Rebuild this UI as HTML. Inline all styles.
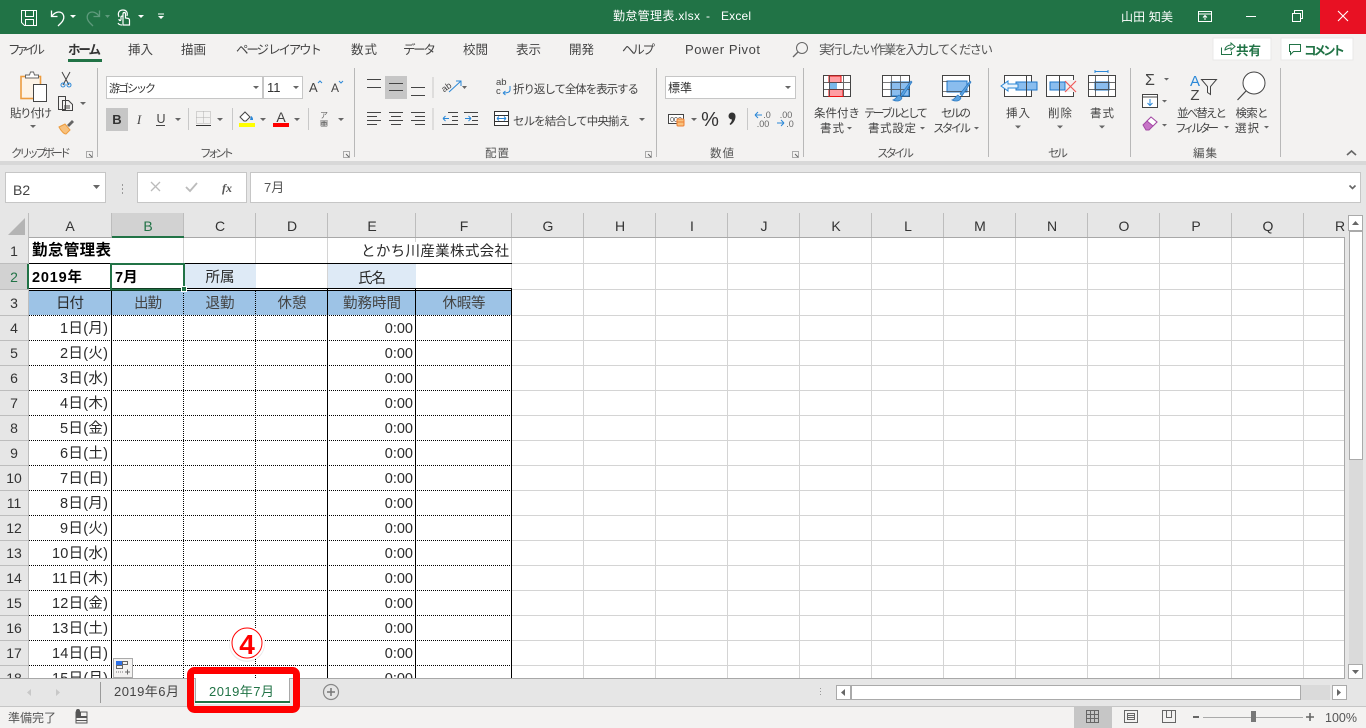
<!DOCTYPE html>
<html lang="ja"><head><meta charset="utf-8"><title>勤怠管理表.xlsx - Excel</title>
<style>
html,body{margin:0;padding:0;background:#e6e6e6;width:1366px;height:728px;overflow:hidden}
svg{display:block}
text{font-family:"Liberation Sans","Noto Sans CJK JP",sans-serif;fill:#444;font-size:12px}
.t{font-size:12.5px;fill:#444}
.g{font-size:11.5px;fill:#555}
.r{font-size:11.5px;fill:#444}
.c{font-size:14.5px;fill:#2a2a2a}
.h{font-size:14px;fill:#333;text-anchor:middle}
.m{text-anchor:middle}
.e{text-anchor:end}
.b{font-weight:bold;fill:#000}
.w{fill:#fff}
.ln{stroke:#444;stroke-width:1;fill:none}
.gr{stroke:#d4d4d4;stroke-width:1;fill:none}
.sep{stroke:#b8b8b8;stroke-width:1}
.dot{stroke:#000;stroke-width:1;stroke-dasharray:1 1;fill:none}
.sol{stroke:#000;stroke-width:1;fill:none}
.tri{fill:#666}
</style></head><body>
<svg width="1366" height="728" viewBox="0 0 1366 728" xmlns="http://www.w3.org/2000/svg">
<rect width="1366" height="728" fill="#e6e6e6"/>
<!-- title bar -->
<rect width="1366" height="34" fill="#217346"/>
<rect x="1320" width="46" height="34" fill="#e81123"/>
<g fill="none" stroke="#fff" stroke-width="1">
<path d="M21.500 10.500h15v15h-12l-3-3z"/><path d="M25.500 10.500v6h8v-6M25.500 25v-5.500h8v5.500"/>
<path d="M51.500 10.500v6h6M52 16c3-4 7-5 10-3 3 3 2 7-1 10l-3 3" stroke-width="1.300"/>
</g>
<path d="M70 15h6l-3 3z" fill="#fff"/>
<g fill="none" stroke="#5e9a7c" stroke-width="1.300"><path d="M99.500 10.500v6h-6M99 16c-3-4-7-5-10-3-3 3-2 7 1 10l3 3"/></g>
<path d="M105 15h5l-2.500 3z" fill="#5e9a7c"/>
<g fill="none" stroke="#fff" stroke-width="1.200"><path d="M119 17c-2-5 1-7 4-7s5 2 4 6M123 25v-11c0-2 2.500-2 2.500 0v4l3 .5c1 .5 1 1 1 2.500v4h-6zM119 19c0 2 2 2 2 0v-2c0-1 1-1 2-1M118 23c1 2 3 2 4 2"/></g>
<path d="M138 15h6l-3 3z" fill="#fff"/>
<path d="M158 13.500h6v1h-6zM158 16h6l-3 3z" fill="#fff"/>
<text x="613" y="20" class="w" textLength="87">勤怠管理表.xlsx</text>
<text x="708" y="20" class="w m">-</text>
<text x="721" y="20" class="w" textLength="30">Excel</text>
<text x="1121" y="21" class="w" textLength="52">山田 知美</text>
<path d="M1198.500 11.500h13v10h-13zM1198.500 14h13M1205 20v-4M1203 17.500l2-2 2 2" fill="none" stroke="#fff"/>
<path d="M1246 16.500h10" stroke="#fff"/>
<path d="M1292.500 13.500h8v8h-8zM1294.500 13v-2.500h8v8H1301" fill="none" stroke="#fff"/>
<path d="M1338 11l10 10M1348 11l-10 10" stroke="#fff" stroke-width="1.100"/>
<!-- ribbon -->
<rect y="34" width="1366" height="127" fill="#f3f2f1"/>
<rect y="161" width="1366" height="4" fill="#d8d8d8"/>
<text x="8" y="54" class="t" textLength="37">ファイル</text>
<text x="68" y="54" class="t" style="font-weight:bold;fill:#333" textLength="33">ホーム</text>
<rect x="68" y="59" width="34" height="3" fill="#217346"/>
<text x="128" y="54" class="t" textLength="25">挿入</text>
<text x="181" y="54" class="t" textLength="25">描画</text>
<text x="236" y="54" class="t" textLength="86">ページ レイアウト</text>
<text x="351" y="54" class="t" textLength="26">数式</text>
<text x="403" y="54" class="t" textLength="33">データ</text>
<text x="463" y="54" class="t" textLength="25">校閲</text>
<text x="516" y="54" class="t" textLength="25">表示</text>
<text x="569" y="54" class="t" textLength="25">開発</text>
<text x="622" y="54" class="t" textLength="33">ヘルプ</text>
<text x="685" y="54" style="font-size:13px;fill:#444" textLength="75">Power Pivot</text>
<circle cx="802" cy="48" r="5.500" fill="none" stroke="#666"/><path d="M798 52l-5 5" stroke="#666" stroke-width="1.300"/>
<text x="819" y="54" class="t" style="fill:#555" textLength="174">実行したい作業を入力してください</text>
<rect x="1213" y="38" width="58" height="22" fill="#fff" stroke="#e8e8e8"/>
<path d="M1221.500 47.500v7h10v-3M1225 50c0-3 3-5 6-5v-2l4 3.500-4 3.500v-2c-2 0-4 1-6 2z" fill="none" stroke="#217346"/>
<text x="1236" y="55" style="font-size:12.500px;font-weight:bold;fill:#217346" textLength="25">共有</text>
<rect x="1281" y="38" width="72" height="22" fill="#fff" stroke="#e8e8e8"/>
<path d="M1289.500 44.500h11v7h-7l-3 3v-3h-1z" fill="none" stroke="#217346"/>
<text x="1304" y="55" style="font-size:12.500px;font-weight:bold;fill:#217346" textLength="41">コメント</text>
<!-- separators -->
<g class="sep"><path d="M97.500 68v89M354.500 68v89M656.500 68v89M803.500 68v89M988.500 68v89M1130.500 68v89M1280.500 68v89"/></g>
<!-- clipboard -->
<rect x="21" y="76.500" width="19.500" height="22" fill="#fdf3e6" stroke="#ed9c3e" stroke-width="1.600"/>
<path d="M25.500 78v-3h4l1-3h3l1 3h4v3z" fill="#fff" stroke="#666"/>
<rect x="33.500" y="84.500" width="13" height="17" fill="#fff" stroke="#444"/>
<text x="31" y="117" class="r m" textLength="42">貼り付け</text>
<path d="M30 125h6l-3 3z" class="tri"/>
<path d="M62 72l7 13M70 72l-7 13" stroke="#444" fill="none"/><circle cx="63" cy="85" r="2" fill="none" stroke="#2b88d8"/><circle cx="69" cy="85" r="2" fill="none" stroke="#2b88d8"/>
<path d="M58.500 96.500h7v13h-7zM62.500 100.500h6l4 4v6h-10z" fill="#f3f2f1" stroke="#444"/>
<path d="M64 106h6M64 108h6" stroke="#444"/>
<path d="M80 102h6l-3 3z" class="tri"/>
<path d="M59 127l6-3 5 6-4 4c-2 0-5-3-7-7z" fill="#f8c17d" stroke="#ed9c3e"/><path d="M67 125l5-5 2 2-5 5z" fill="#666"/>
<text x="11" y="157" class="g" textLength="60">クリップボード</text>
<path d="M86.500 151.500h6v6h-6z" fill="none" stroke="#aaa"/><path d="M89 154l3 3" stroke="#666"/>
<!-- font -->
<rect x="106.500" y="76.500" width="156" height="22" fill="#fff" stroke="#c6c6c6"/>
<rect x="263.500" y="76.500" width="39" height="22" fill="#fff" stroke="#c6c6c6"/>
<text x="109" y="92" style="font-size:11px;fill:#333" textLength="47">游ゴシック</text>
<text x="267" y="92" style="font-size:13px;fill:#333">11</text>
<path d="M253 86h6l-3 3zM293 86h6l-3 3z" class="tri"/>
<text x="309" y="92" style="font-size:13px">A</text><path d="M318 83l2-2 2 2" stroke="#2b88d8" fill="none"/>
<text x="331" y="92" style="font-size:12px">A</text><path d="M339 81l2 2 2-2" stroke="#2b88d8" fill="none"/>
<rect x="106" y="108" width="22" height="23" fill="#c6c6c6"/>
<text x="117" y="124" class="m" style="font-size:13px;font-weight:bold;fill:#333">B</text>
<text x="139" y="124" class="m" style="font-size:13px;font-style:italic;font-family:'Liberation Serif',serif">I</text>
<text x="161" y="123" class="m" style="font-size:12.500px">U</text><path d="M156 125.500h9" stroke="#444"/>
<path d="M175 118h6l-3 3zM217 118h6l-3 3zM260 118h6l-3 3zM294 118h6l-3 3zM338 118h6l-3 3z" class="tri"/>
<path d="M188.500 108v22M232.500 108v22M308.500 108v22M433 77v21M433 108v22" stroke="#c8c8c8"/>
<path d="M196.500 111.500h14v12h-14zM203.500 111.500v12M196.500 117.500h14" fill="none" stroke="#b0b0b0" stroke-dasharray="1 1"/><path d="M196 125.500h15" stroke="#333"/>
<path d="M240 117l5-5 5 5-4 4h-2z" fill="#fff" stroke="#444"/><path d="M251 116c2 1 2 3 2 4h-3z" fill="#2b88d8"/>
<rect x="239" y="123" width="16" height="4" fill="#ff0"/>
<text x="281" y="122" class="m" style="font-size:14px">A</text><rect x="273" y="123" width="16" height="4" fill="#f00"/>
<text x="324" y="118" class="m" style="font-size:8px;fill:#666">ア</text><path d="M320 121h8M320 123h8M320 125h8" stroke="#888"/><text x="324" y="126" class="m" style="font-size:7px;fill:#666">亜</text>
<text x="200" y="157" class="g" textLength="34">フォント</text>
<path d="M343.500 151.500h6v6h-6z" fill="none" stroke="#aaa"/><path d="M346 154l3 3" stroke="#666"/>
<!-- alignment -->
<rect x="385" y="76" width="22" height="23" fill="#c6c6c6"/>
<g class="ln"><path d="M367 79.500h14M367 87.500h14M389 83.500h14M389 90.500h14M411 87.500h14M411 95.500h14"/>
<path d="M367 112.500h14M367 116.500h10M367 120.500h14M367 124.500h10M389 112.500h14M391 116.500h10M389 120.500h14M391 124.500h10M411 112.500h14M415 116.500h10M411 120.500h14M415 124.500h10M448 112.500h10M452 116.500h6M452 120.500h6M442 124.500h16M464 112.500h14M472 116.500h6M472 120.500h6M464 124.500h14"/></g>
<path d="M443 118.500h6M443 118.500l2.500-2.500M443 118.500l2.500 2.500M465 118.500h6M471 118.500l-2.500-2.500M471 118.500l-2.500 2.500" stroke="#2b88d8" fill="none"/>
<text x="441" y="89" style="font-size:9px;fill:#444" transform="rotate(-35 448 86)">ab</text><path d="M449 92l12-11M456 81h5v5" stroke="#2b88d8" fill="none"/>
<path d="M462 86h5l-2.500 3z" class="tri"/>
<text x="496" y="85" style="font-size:9.500px">ab</text><text x="496" y="94" style="font-size:9.500px">c</text><path d="M510 86v4c0 2-2 3-6 3M503 93l2.500-2M503 93l2.500 2" stroke="#2b88d8" fill="none"/>
<text x="513" y="93" class="r" textLength="126">折り返して全体を表示する</text>
<rect x="494.500" y="111.500" width="14" height="14" fill="#fff" stroke="#333"/><path d="M494.500 115.500h14M494.500 121.500h14" stroke="#333"/><rect x="495" y="116" width="13" height="5" fill="#fff"/><path d="M497 118.500h9M497 118.500l2-2M497 118.500l2 2M506 118.500l-2-2M506 118.500l-2 2" stroke="#2b88d8" fill="none"/>
<text x="513" y="125" class="r" textLength="117">セルを結合して中央揃え</text>
<path d="M639 118h6l-3 3z" class="tri"/>
<text x="485" y="157" class="g" textLength="24">配置</text>
<path d="M645.500 151.500h6v6h-6z" fill="none" stroke="#aaa"/><path d="M648 154l3 3" stroke="#666"/>
<!-- number -->
<rect x="665.500" y="76.500" width="130" height="22" fill="#fff" stroke="#c6c6c6"/>
<text x="668" y="92" style="font-size:12px;fill:#333" textLength="24">標準</text>
<path d="M785 86h6l-3 3zM691 118h6l-3 3z" class="tri"/>
<rect x="668.500" y="114.500" width="15" height="9" fill="#fff" stroke="#444"/><text x="676" y="122" class="m" style="font-size:7px">000</text>
<rect x="677" y="119" width="7" height="7" rx="1" fill="#f8c17d" stroke="#ed7d31"/><path d="M677 122h7" stroke="#ed7d31"/>
<text x="710" y="126" class="m" style="font-size:20px;fill:#333">%</text>
<circle cx="732" cy="116" r="3.500" fill="#333"/><path d="M735.500 116c0 4-2 7-5 9l-1-1c1.500-1.500 2.500-3 2.500-5z" fill="#333"/>
<path d="M747.500 108v22" stroke="#c8c8c8"/>
<text x="767" y="118" class="m" style="font-size:9px;fill:#666">.0</text><text x="763" y="127" class="m" style="font-size:9px;fill:#666">.00</text>
<path d="M755 115h7M755 115l3-3M755 115l3 3M777 123h7M784 123l-3-3M784 123l-3 3" stroke="#2b88d8" fill="none"/>
<text x="786" y="118" class="m" style="font-size:9px;fill:#666">.00</text><text x="790" y="127" class="m" style="font-size:9px;fill:#666">.0</text>
<text x="710" y="157" class="g" textLength="24">数値</text>
<path d="M792.500 151.500h6v6h-6z" fill="none" stroke="#aaa"/><path d="M795 154l3 3" stroke="#666"/>
<!-- styles -->
<rect x="823.500" y="75.500" width="27" height="21" fill="#fff" stroke="#444"/>
<rect x="829" y="76" width="12" height="6.500" fill="#ff9ea3" stroke="#e11"/><rect x="829" y="82.500" width="8" height="7" fill="#7ab8ea"/><rect x="829" y="89.500" width="14" height="7" fill="#ff9ea3" stroke="#e11"/>
<path d="M829.500 76v20M843.500 76v20M823.500 82.500h27M823.500 89.500h27" stroke="#444" fill="none" opacity=".8"/>
<rect x="882.500" y="75.500" width="27" height="21" fill="#fff" stroke="#444"/><rect x="891" y="82" width="18" height="14" fill="#8abdee" stroke="#1f77c9"/>
<path d="M891.500 76v20M900.500 76v20M883 82.500h27M883 89.500h27" stroke="#444" fill="none" opacity=".7"/>
<path d="M893 100c3-1 4-4 6-5l3 3c-1 3-5 4-9 2zM901 94l10-13 1 1-9 14z" fill="#5ba3e0" stroke="#2b78c2" stroke-width=".7"/>
<rect x="942.500" y="75.500" width="27" height="21" fill="#fff" stroke="#444"/><rect x="947" y="81" width="20" height="11" fill="#8abdee" stroke="#1f77c9"/>
<path d="M948 87l0 0M942.500 81.500h5M942.500 91.500h27" stroke="#444" fill="none" opacity=".7"/>
<path d="M952 100c3-1 4-4 6-5l3 3c-1 3-5 4-9 2zM960 94l10-13 1 1-9 14z" fill="#5ba3e0" stroke="#2b78c2" stroke-width=".7"/>
<g class="r">
<text x="837" y="117" class="r m" textLength="46">条件付き</text>
<text x="832" y="132" class="r m" textLength="24">書式</text>
<text x="896" y="117" class="r m" textLength="64">テーブルとして</text>
<text x="892" y="132" class="r m" textLength="48">書式設定</text>
<text x="956" y="117" class="r m" textLength="30">セルの</text>
<text x="952" y="132" class="r m" textLength="38">スタイル</text>
</g>
<path d="M847 127h5l-2.500 2.500zM920 127h5l-2.500 2.500zM974 127h5l-2.500 2.500z" class="tri"/>
<text x="877" y="157" class="g" textLength="37">スタイル</text>
<!-- cells -->
<rect x="1004.500" y="75.500" width="27" height="21" fill="#fff" stroke="#444"/><rect x="1016" y="82" width="21" height="8" fill="#8abdee" stroke="#1f77c9" stroke-width="1"/><path d="M1026.500 76v20" stroke="#444"/>
<path d="M1001 86l7-5v3h10v4h-10v3z" fill="#eaf3fb" stroke="#2b88d8"/>
<rect x="1046.500" y="75.500" width="27" height="21" fill="#fff" stroke="#444"/><rect x="1050" y="82" width="15" height="8" fill="#8abdee" stroke="#1f77c9"/><path d="M1059.500 76v20" stroke="#444"/>
<rect x="1066" y="80" width="10" height="12" fill="#f3f2f1"/><path d="M1065 81l11 11M1076 81l-11 11" stroke="#f05a5a" stroke-width="1.200"/>
<rect x="1088.500" y="75.500" width="27" height="21" fill="#fff" stroke="#444"/><rect x="1095" y="82" width="14" height="8" fill="#8abdee" stroke="#1f77c9"/><path d="M1095.500 76v20M1108.500 76v20M1089 82.500h27M1089 89.500h27" stroke="#444" opacity=".8"/><path d="M1095 71.500h13M1095 70v3M1108 70v3" stroke="#2b88d8"/>
<text x="1018" y="117" class="r m" textLength="24">挿入</text><text x="1060" y="117" class="r m" textLength="24">削除</text><text x="1102" y="117" class="r m" textLength="24">書式</text>
<path d="M1015 125.500h6l-3 3zM1057 125.500h6l-3 3zM1099 125.500h6l-3 3z" class="tri"/>
<text x="1048" y="157" class="g" textLength="20">セル</text>
<!-- editing -->
<text x="1150" y="85" class="m" style="font-size:16px;fill:#444">Σ</text>
<path d="M1164 78h5l-2.500 2.500zM1162 100h5l-2.500 2.500zM1162 124h5l-2.500 2.500zM1224 126h5l-2.500 2.500zM1264 126h5l-2.500 2.500z" class="tri"/>
<rect x="1142.500" y="94.500" width="15" height="13" fill="#fff" stroke="#444"/><path d="M1142 97h15" stroke="#444"/><path d="M1150 99v6M1147.500 103l2.500 2.500 2.500-2.500" stroke="#2b88d8" fill="none"/>
<path d="M1143 125l8-8 6 5-8 8h-3z" fill="#c774c7" stroke="#a349a4"/><path d="M1147 121l4-4 6 5-4 4z" fill="#fff" stroke="#a349a4"/>
<text x="1195" y="86" class="m" style="font-size:15px;fill:#2b88d8">A</text><text x="1195" y="100" class="m" style="font-size:15px;fill:#444">Z</text>
<path d="M1201.500 79.500h15l-6 7v8l-3-2v-6z" fill="none" stroke="#444"/>
<circle cx="1254" cy="83" r="11" fill="#fff" stroke="#444"/><path d="M1246 91l-8.500 9" stroke="#444" stroke-width="1.200"/>
<text x="1202" y="117" class="r m" textLength="50">並べ替えと</text><text x="1197" y="132" class="r m" textLength="44">フィルター</text>
<text x="1252" y="117" class="r m" textLength="33">検索と</text><text x="1247" y="132" class="r m" textLength="24">選択</text>
<text x="1193" y="157" class="g" textLength="24">編集</text>
<path d="M1347 155l4.500-4 4.500 4" fill="none" stroke="#666" stroke-width="1.600"/>
<!-- formula bar -->
<rect x="5.500" y="172.500" width="100" height="30" fill="#fff" stroke="#c6c6c6"/>
<text x="13" y="195" style="font-size:14px;fill:#444">B2</text>
<path d="M93 185h7l-3.500 4z" class="tri"/>
<path d="M122.500 184v2M122.500 188v2M122.500 192v2" stroke="#999"/>
<rect x="137.500" y="172.500" width="109" height="30" fill="#fff" stroke="#c6c6c6"/>
<path d="M151 182l9 9M160 182l-9 9" stroke="#bbb" stroke-width="1.300"/>
<path d="M186 187l4 4 7-8" stroke="#bbb" stroke-width="1.800" fill="none"/>
<text x="222" y="192" style="font-size:12px;font-style:italic;font-weight:bold;font-family:'Liberation Serif',serif;fill:#555">fx</text>
<rect x="250.500" y="172.500" width="1110" height="30" fill="#fff" stroke="#c6c6c6"/>
<text x="264" y="192" style="font-size:13px;fill:#555">7月</text>
<path d="M1349.500 185.500l3 3 3-3" fill="none" stroke="#666" stroke-width="1.600"/>
<!-- sheet -->
<rect x="29" y="238" width="1316" height="440" fill="#fff"/>
<!-- grid lines -->
<g class="gr">
<path d="M512 263.500H1345M512 289.500H1345M512 315.500H1345M512 340.500H1345M512 365.500H1345M512 390.500H1345M512 415.500H1345M512 440.500H1345M512 465.500H1345M512 490.500H1345M512 515.500H1345M512 540.500H1345M512 565.500H1345M512 590.500H1345M512 615.500H1345M512 640.500H1345M512 665.500H1345"/>
<path d="M583.500 238V678M655.500 238V678M727.500 238V678M799.500 238V678M871.500 238V678M943.500 238V678M1015.500 238V678M1087.500 238V678M1159.500 238V678M1231.500 238V678M1303.500 238V678"/>
<path d="M183.500 238V263M255.500 238V263M327.500 238V263M415.500 238V242M511.500 238V289M327.500 264V289"/>
</g>
<rect x="184" y="264" width="72" height="25" fill="#deeaf6"/>
<rect x="328" y="264" width="88" height="25" fill="#deeaf6"/>
<rect x="29" y="291" width="483" height="24" fill="#9dc3e6"/>
<path d="M29 263.500H512M29 288.500H512M29 290.500H512" class="sol"/>
<path d="M29 315.500H512M29 340.500H512M29 365.500H512M29 390.500H512M29 415.500H512M29 440.500H512M29 465.500H512M29 490.500H512M29 515.500H512M29 540.500H512M29 565.500H512M29 590.500H512M29 615.500H512M29 640.500H512M29 665.500H512" class="dot"/>
<path d="M111.500 289V678M327.500 289V678M415.500 289V678M511.500 288V678" class="sol"/>
<path d="M183.500 291V678M255.500 291V678" class="dot"/>
<!-- grid edge -->
<path d="M1344.500 238V678" stroke="#a8a8a8"/>
<rect x="0" y="213" width="1345" height="25" fill="#e6e6e6"/>
<rect x="0" y="238" width="28" height="440" fill="#e6e6e6"/>
<rect x="112" y="213" width="72" height="24" fill="#d2d2d2"/>
<rect x="0" y="264" width="28" height="25" fill="#d2d2d2"/>
<path d="M25 218v17H8z" fill="#b4b4b4"/>
<path d="M28.500 213V678M0 263.500H28M0 289.500H28M0 315.500H28M0 340.500H28M0 365.500H28M0 390.500H28M0 415.500H28M0 440.500H28M0 465.500H28M0 490.500H28M0 515.500H28M0 540.500H28M0 565.500H28M0 590.500H28M0 615.500H28M0 640.500H28M0 665.500H28" stroke="#bdbdbd"/>
<path d="M111.500 213V237M183.500 213V237M255.500 213V237M327.500 213V237M415.500 213V237M511.500 213V237M583.500 213V237M655.500 213V237M727.500 213V237M799.500 213V237M871.500 213V237M943.500 213V237M1015.500 213V237M1087.500 213V237M1159.500 213V237M1231.500 213V237M1303.500 213V237" stroke="#bdbdbd"/>
<path d="M29 237.500H1345" stroke="#a8a8a8"/>
<path d="M112 237H184" stroke="#217346" stroke-width="2"/>
<path d="M28 264V289" stroke="#217346" stroke-width="2"/>
<!-- col headers -->
<text x="70" y="231" class="h">A</text><text x="148" y="231" class="h" style="fill:#217346">B</text><text x="220" y="231" class="h">C</text><text x="292" y="231" class="h">D</text><text x="372" y="231" class="h">E</text><text x="464" y="231" class="h">F</text><text x="548" y="231" class="h">G</text><text x="620" y="231" class="h">H</text><text x="692" y="231" class="h">I</text><text x="764" y="231" class="h">J</text><text x="836" y="231" class="h">K</text><text x="908" y="231" class="h">L</text><text x="980" y="231" class="h">M</text><text x="1052" y="231" class="h">N</text><text x="1124" y="231" class="h">O</text><text x="1196" y="231" class="h">P</text><text x="1268" y="231" class="h">Q</text><text x="1340" y="231" class="h">R</text>
<!-- row headers -->
<text x="14" y="256" class="h">1</text><text x="14" y="282" class="h" style="fill:#217346">2</text><text x="14" y="308" class="h">3</text><text x="14" y="333" class="h">4</text><text x="14" y="358" class="h">5</text><text x="14" y="383" class="h">6</text><text x="14" y="408" class="h">7</text><text x="14" y="433" class="h">8</text><text x="14" y="458" class="h">9</text><text x="14" y="483" class="h">10</text><text x="14" y="508" class="h">11</text><text x="14" y="533" class="h">12</text><text x="14" y="558" class="h">13</text><text x="14" y="583" class="h">14</text><text x="14" y="608" class="h">15</text><text x="14" y="633" class="h">16</text><text x="14" y="658" class="h">17</text>
<!-- cell text -->
<text x="32" y="255" class="c b" style="font-size:15.500px" textLength="79">勤怠管理表</text>
<text x="509" y="256" class="c e" textLength="148">とかち川産業株式会社</text>
<text x="32" y="282" class="c b" textLength="50">2019年</text>
<text x="115" y="282" class="c b">7月</text>
<text x="220" y="282" class="c m" textLength="29">所属</text>
<text x="372" y="283" class="c m" textLength="28">氏名</text>
<text x="70" y="308" class="c m" textLength="28">日付</text><text x="148" y="308" class="c m" textLength="28" style="fill:#444">出勤</text><text x="220" y="308" class="c m" textLength="29" style="fill:#444">退勤</text><text x="292" y="308" class="c m" textLength="29" style="fill:#444">休憩</text><text x="372" y="308" class="c m" textLength="58" style="fill:#444">勤務時間</text><text x="464" y="308" class="c m" textLength="43" style="fill:#444">休暇等</text>
<g>
<text x="108" y="333" class="c e" textLength="48">1日(月)</text><text x="108" y="358" class="c e" textLength="48">2日(火)</text><text x="108" y="383" class="c e" textLength="48">3日(水)</text><text x="108" y="408" class="c e" textLength="48">4日(木)</text><text x="108" y="433" class="c e" textLength="48">5日(金)</text><text x="108" y="458" class="c e" textLength="48">6日(土)</text><text x="108" y="483" class="c e" textLength="48">7日(日)</text><text x="108" y="508" class="c e" textLength="48">8日(月)</text><text x="108" y="533" class="c e" textLength="48">9日(火)</text><text x="108" y="558" class="c e" textLength="56">10日(水)</text><text x="108" y="583" class="c e" textLength="56">11日(木)</text><text x="108" y="608" class="c e" textLength="56">12日(金)</text><text x="108" y="633" class="c e" textLength="56">13日(土)</text><text x="108" y="658" class="c e" textLength="56">14日(日)</text><text x="108" y="683" class="c e" textLength="56">15日(月)</text>
<text x="413" y="333" class="c e">0:00</text><text x="413" y="358" class="c e">0:00</text><text x="413" y="383" class="c e">0:00</text><text x="413" y="408" class="c e">0:00</text><text x="413" y="433" class="c e">0:00</text><text x="413" y="458" class="c e">0:00</text><text x="413" y="483" class="c e">0:00</text><text x="413" y="508" class="c e">0:00</text><text x="413" y="533" class="c e">0:00</text><text x="413" y="558" class="c e">0:00</text><text x="413" y="583" class="c e">0:00</text><text x="413" y="608" class="c e">0:00</text><text x="413" y="633" class="c e">0:00</text><text x="413" y="658" class="c e">0:00</text><text x="413" y="683" class="c e">0:00</text>
</g>
<text x="14" y="683" class="h">18</text>
<!-- selection -->
<rect x="111" y="264" width="73" height="25.500" fill="none" stroke="#217346" stroke-width="2"/>
<rect x="181.500" y="286.500" width="5" height="5" fill="#217346" stroke="#fff"/>
<!-- autofill options -->
<rect x="113.500" y="658.500" width="19" height="19" fill="#f3f2f1" stroke="#aaa"/>
<rect x="116" y="661" width="6" height="4" fill="#2b6fe8"/><path d="M122.500 661.500h5v3h-5zM116.500 665.500h6v3h-6z" fill="none" stroke="#666"/><path d="M116 672h7" stroke="#777" stroke-dasharray="1 1"/><path d="M125 672h5M127.500 669.500v5" stroke="#666"/>
<!-- scrollbars and bottom -->
<rect x="1345" y="213" width="21" height="493" fill="#e6e6e6"/>
<rect x="1349" y="232" width="14" height="433" fill="#dadada"/>
<rect x="1348.500" y="215.500" width="14" height="15" fill="#fff" stroke="#aaa"/><path d="M1352 225h7l-3.500-4z" class="tri"/>
<rect x="1349.500" y="231.500" width="13" height="228" fill="#fff" stroke="#aaa"/>
<rect x="1348.500" y="664.500" width="14" height="14" fill="#fff" stroke="#aaa"/><path d="M1352 670h7l-3.500 4z" class="tri"/>
<rect x="0" y="678" width="1345" height="28" fill="#e6e6e6"/>
<path d="M0 678.500H1345" stroke="#a8a8a8"/>
<path d="M31 689v7l-4-3.500zM56 689v7l4-3.500z" fill="#c8c8c8"/>
<path d="M100.500 682v21" stroke="#9a9a9a"/>
<text x="114" y="696" style="font-size:13px;fill:#444" textLength="65">2019年6月</text>
<rect x="195" y="678" width="95" height="26" fill="#fff"/>
<path d="M195.500 678v25M289.500 678v25" stroke="#a8a8a8"/>
<rect x="195" y="701" width="95" height="2" fill="#217346"/>
<text x="209" y="696" style="font-size:13px;fill:#217346" textLength="65">2019年7月</text>
<circle cx="331" cy="692" r="7.500" fill="none" stroke="#888" stroke-width="1.200"/><path d="M327 692h8M331 688v8" stroke="#777" stroke-width="1.500"/>
<path d="M820.500 688v1M820.500 691v1M820.500 694v1" stroke="#999"/>
<rect x="836.500" y="685.500" width="14" height="14" fill="#fff" stroke="#aaa"/><path d="M845 689v7l-4-3.500z" class="tri"/>
<rect x="851.500" y="685.500" width="449" height="14" fill="#fff" stroke="#aaa"/>
<rect x="1301" y="685" width="29" height="15" fill="#dadada"/>
<rect x="1332.500" y="685.500" width="14" height="14" fill="#fff" stroke="#aaa"/><path d="M1337 689v7l4-3.500z" class="tri"/>
<!-- status bar -->
<rect y="706" width="1366" height="22" fill="#f3f2f1"/>
<path d="M0 706.500H1366" stroke="#c6c6c6"/>
<text x="8" y="722" style="font-size:12px;fill:#555" textLength="48">準備完了</text>
<path d="M76 712h11v11H76z" fill="none" stroke="#555"/><path d="M76 712h5v4h-5zM76 716h11v2H76zM76 720h11v1H76z" fill="#555"/><circle cx="78" cy="711" r="2" fill="#555"/>
<rect x="1074" y="707" width="38" height="21" fill="#c6c6c6"/>
<path d="M1086.500 710.500h12v12h-12zM1090.500 710.500v12M1094.500 710.500v12M1086.500 714.500h12M1086.500 718.500h12" fill="none" stroke="#666"/>
<path d="M1124.500 710.500h13v12h-13zM1127.500 713.500h7v6h-7zM1128 715.500h6M1128 717.500h6" fill="none" stroke="#666"/>
<path d="M1162.500 710.500h13v12h-13zM1166.500 710.500v7h5v-7" fill="none" stroke="#666"/>
<path d="M1193 717h6" stroke="#666" stroke-width="2"/>
<path d="M1203 717.500h100" stroke="#aaa"/>
<rect x="1251" y="711" width="5" height="11" fill="#777"/>
<path d="M1306 717h8M1310 713v8" stroke="#666" stroke-width="1.600"/>
<text x="1325" y="722" style="font-size:12.500px;fill:#555" textLength="32">100%</text>
<!-- annotation -->
<rect x="190.500" y="670.500" width="106" height="39" rx="4" fill="none" stroke="#f00" stroke-width="7"/>
<circle cx="247" cy="644" r="18" fill="#000" opacity=".08"/>
<circle cx="247" cy="643" r="17.500" fill="#fff"/>
<circle cx="247" cy="643" r="15" fill="#fff" stroke="#f00" stroke-width="1"/>
<text x="247" y="654" class="m" style="font-size:28px;font-weight:bold;fill:#f00">4</text>
</svg>
</body></html>
